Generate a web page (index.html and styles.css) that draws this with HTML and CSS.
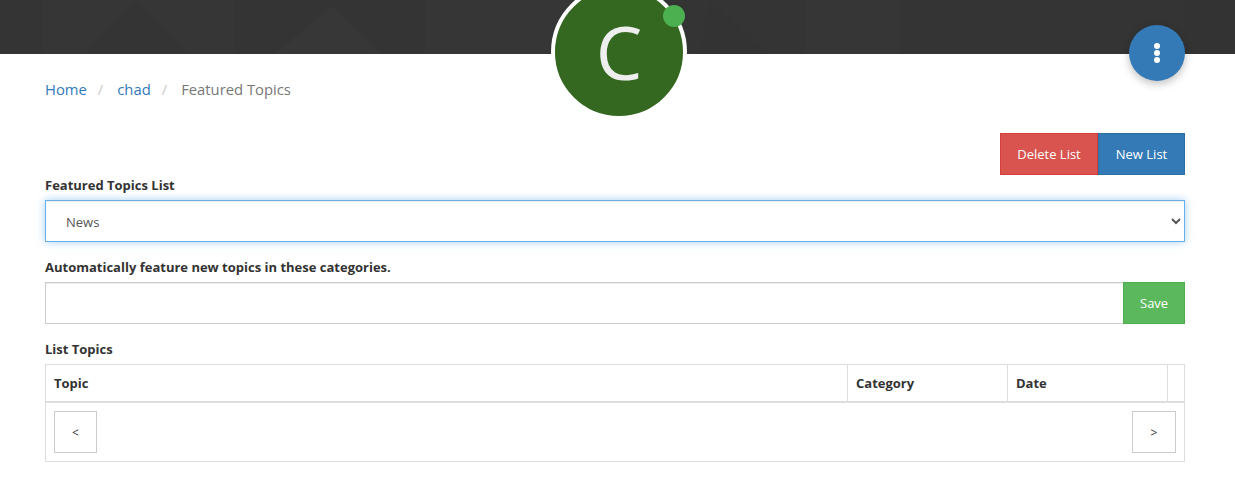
FILE: index.html
```html
<!DOCTYPE html>
<html lang="en">
<head>
<meta charset="utf-8">
<title>Featured Topics</title>
<link rel="stylesheet" href="styles.css">
</head>
<body>
<header class="cover">
  <svg class="cover-pattern" width="1235" height="54" viewBox="0 0 1235 54" aria-hidden="true">
    <rect x="43" width="192" height="54" fill="#363636"/>
    <rect x="425" width="185" height="54" fill="#363636"/>
    <rect x="805" width="95" height="54" fill="#363636"/>
    <rect x="1185" width="50" height="54" fill="#333"/>
    <polygon points="85,54 137,0 190,54" fill="#343434"/>
    <polygon points="275,54 332,6 382,54" fill="#373737"/>
    <polygon points="710,0 765,54 700,54" fill="#333"/>
  </svg>
  <div class="avatar">
    <span class="avatar-letter">C</span>
  </div>
  <span class="status-dot"></span>
  <button class="fab" type="button" aria-label="More">
    <span class="fab-dot"></span><span class="fab-dot"></span><span class="fab-dot"></span>
  </button>
</header>
<main class="page">
  <nav class="crumbs">
    <a href="#">Home</a><span class="sep">/</span>
    <a href="#">chad</a><span class="sep">/</span>
    <span class="current">Featured Topics</span>
  </nav>
  <div class="actions">
    <button class="btn btn-danger" type="button">Delete List</button>
    <button class="btn btn-primary" type="button">New List</button>
  </div>
  <label class="field-label label-first">Featured Topics List</label>
  <select class="control select-focus">
    <option>News</option>
  </select>
  <label class="field-label label-next">Automatically feature new topics in these categories.</label>
  <div class="input-row">
    <input class="control input-grow" type="text">
    <button class="btn btn-success" type="button">Save</button>
  </div>
  <label class="field-label label-list">List Topics</label>
  <div class="grid">
    <div class="grid-head">
      <div class="cell cell-topic">Topic</div>
      <div class="cell cell-category">Category</div>
      <div class="cell cell-date">Date</div>
      <div class="cell cell-end"></div>
    </div>
    <div class="grid-foot">
      <button class="pager pager-prev" type="button">&lt;</button>
      <button class="pager pager-next" type="button">&gt;</button>
    </div>
  </div>
</main>
</body>
</html>
```

FILE: styles.css
```css
* { box-sizing: border-box; }
html, body { margin: 0; padding: 0; }
body {
  background: #fff;
  color: #333;
  font-family: "Open Sans", "Noto Sans", sans-serif;
  font-size: 13px;
  overflow: hidden;
}
.cover {
  position: relative;
  height: 54px;
  background: #343434;
}
.cover-pattern { display: block; }
.avatar {
  position: absolute;
  left: 551px;
  top: -16px;
  width: 136px;
  height: 136px;
  border: 4px solid #fff;
  border-radius: 50%;
  background: #34671f;
  display: flex;
  align-items: center;
  justify-content: center;
}
.avatar-letter {
  color: #eee;
  font-size: 74px;
  font-weight: 400;
  line-height: 1;
}
.status-dot {
  position: absolute;
  left: 663px;
  top: 5px;
  width: 22px;
  height: 22px;
  border-radius: 50%;
  background: #4caf50;
}
.fab {
  position: absolute;
  left: 1129px;
  top: 25px;
  width: 56px;
  height: 56px;
  padding: 0;
  border: 0;
  border-radius: 50%;
  background: #337ab7;
  box-shadow: 0 3px 8px rgba(0, 0, 0, .25);
  display: flex;
  flex-direction: column;
  align-items: center;
  justify-content: center;
  gap: 1px;
}
.fab-dot {
  width: 6px;
  height: 6px;
  border-radius: 50%;
  background: #fff;
}
.page {
  padding: 0 50px 0 45px;
}
.crumbs {
  display: flex;
  align-items: center;
  height: 22px;
  margin-top: 24px;
  font-size: 14.8px;
}
.crumbs a { color: #337ab7; text-decoration: none; }
.crumbs .current { color: #777; }
.sep { color: #ccc; margin: 0 14px 0 11px; }
.actions {
  display: flex;
  justify-content: flex-end;
  margin-top: 33px;
}
.btn {
  height: 42px;
  border: 1px solid transparent;
  color: #fff;
  font: inherit;
  font-size: 13px;
  padding: 0 16px;
}
.btn-danger { width: 98px; background: #d9534f; border-color: #d43f3a; }
.btn-primary { width: 87px; background: #337ab7; border-color: #2e6da4; }
.btn-success { width: 62px; background: #5cb85c; border-color: #4cae4c; flex: none; }
.field-label {
  display: block;
  height: 18px;
  line-height: 18px;
  font-size: 13px;
  font-weight: 700;
  color: #333;
}
.label-first { margin-top: 1px; margin-bottom: 6px; }
.label-next { margin-top: 16px; margin-bottom: 6px; }
.label-list { margin-top: 16px; margin-bottom: 6px; }
.control {
  display: block;
  width: 100%;
  height: 42px;
  background: #fff;
  border: 1px solid #ccc;
  border-radius: 0;
  color: #555;
  font: inherit;
  font-size: 13px;
  padding: 0 16px;
  outline: 0;
}
.select-focus {
  padding-top: 2px;
  border-color: #66afe9;
  box-shadow: inset 0 1px 1px rgba(0, 0, 0, .075), 0 0 8px rgba(102, 175, 233, .6);
}
.input-row { display: flex; }
.input-grow {
  flex: 1;
  min-width: 0;
  border-right: 0;
  box-shadow: inset 0 1px 1px rgba(0, 0, 0, .075);
}
.grid {
  border: 1px solid #ddd;
}
.grid-head {
  display: flex;
  height: 38px;
  border-bottom: 2px solid #ddd;
}
.cell {
  display: flex;
  align-items: center;
  padding-left: 8px;
  font-size: 13px;
  font-weight: 700;
  color: #333;
  border-left: 1px solid #ddd;
}
.cell-topic { flex: 1; border-left: 0; }
.cell-category { width: 160px; }
.cell-date { width: 160px; }
.cell-end { width: 17px; }
.grid-foot {
  display: flex;
  justify-content: space-between;
  padding: 8px;
  height: 58px;
}
.pager {
  width: 43px;
  height: 42px;
  background: #fff;
  border: 1px solid #ccc;
  color: #333;
  font: inherit;
  font-size: 12px;
  padding: 0;
}
.pager-next { width: 44px; }
```
